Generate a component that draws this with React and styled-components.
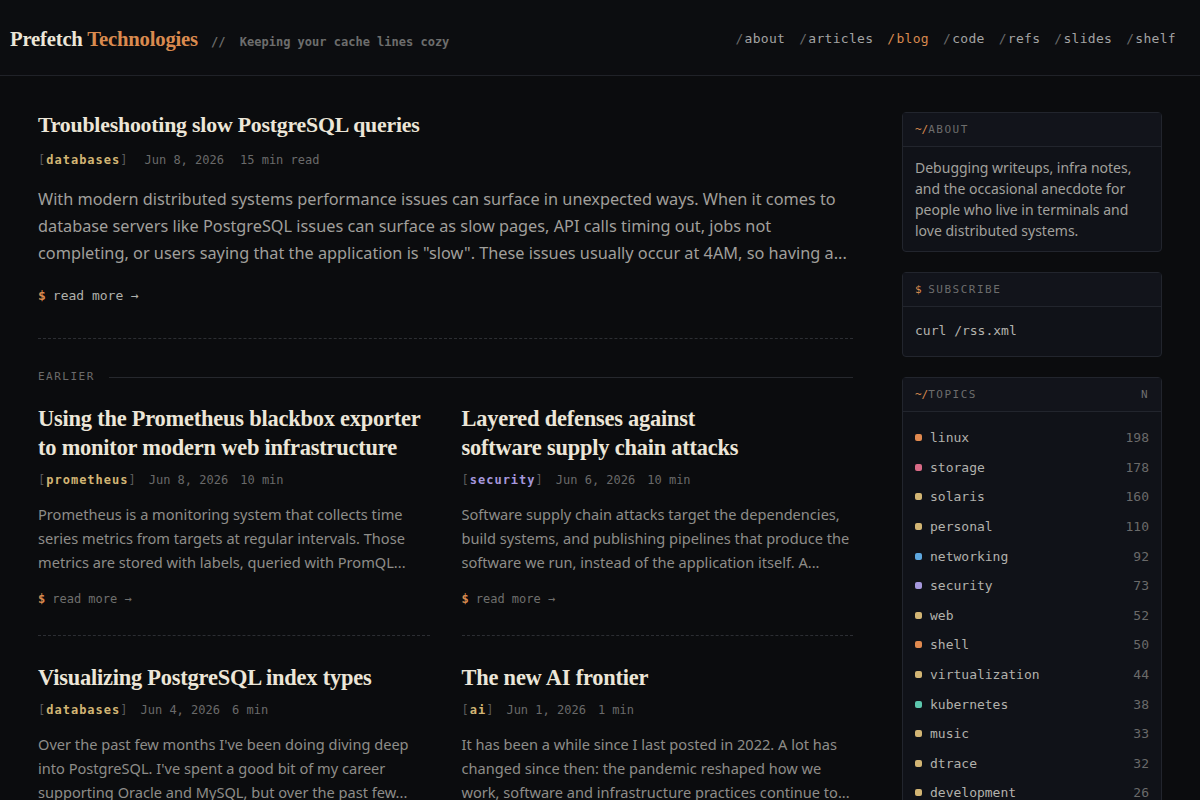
import React from "react";
import styled, { createGlobalStyle } from "styled-components";

const MONO = `"DejaVu Sans Mono", "Liberation Mono", monospace`;
const SANS = `"Noto Sans", "Open Sans", sans-serif`;
const SERIF = `"Liberation Serif", "Times New Roman", serif`;

const C = {
  bg: "#0b0c0e",
  line: "#202228",
  title: "#ece6d8",
  text: "#a09f9b",
  textDim: "#8e8d89",
  meta: "#6a6a6a",
  orange: "#d98a4f",
  yellow: "#d2b574",
  lavender: "#a597dc",
  box: "#101218",
  boxBorder: "#22252d",
};

const Global = createGlobalStyle`
  html, body { margin: 0; padding: 0; background: ${C.bg}; }
  body { font-family: ${SANS}; color: ${C.text}; }
  * { box-sizing: border-box; }
`;

const Header = styled.header`
  height: 76px;
  border-bottom: 1px solid ${C.line};
  display: flex;
  align-items: center;
  justify-content: space-between;
  padding: 2px 24px 0 10px;
  background: #0c0d10;
`;

const Brand = styled.div`
  display: flex;
  align-items: baseline;
  gap: 13px;
  padding-top: 1px;
`;

const Logo = styled.div`
  font-family: ${SERIF};
  font-weight: 700;
  font-size: 20.7px;
  color: ${C.title};
  letter-spacing: -0.2px;
  span { color: ${C.orange}; }
`;

const Tagline = styled.div`
  font-family: ${MONO};
  font-size: 12px;
  font-weight: 700;
  color: #6d6d6d;
  white-space: pre;
`;

const Nav = styled.nav`
  display: flex;
  gap: 14px;
  font-family: ${MONO};
  font-size: 13px;
  letter-spacing: 0.3px;
`;

const NavItem = styled.a`
  color: ${(p) => (p.$active ? C.orange : "#a3a3a3")};
  text-decoration: none;
  span { color: ${(p) => (p.$active ? C.orange : "#6a6a6a")}; margin-right: 1px; }
`;

const Page = styled.div`
  max-width: 1124px;
  margin: 0 auto;
  display: grid;
  grid-template-columns: 1fr 260px;
  gap: 49px;
  padding: 35px 0 40px;
`;

const Main = styled.main`
  min-width: 0;
`;

const Featured = styled.article`
  padding-bottom: 32px;
  border-bottom: 1px dashed #2c2e33;
`;

const Title = styled.h2`
  margin: 0;
  font-family: ${SERIF};
  font-weight: 700;
  color: ${C.title};
  font-size: ${(p) => (p.$big ? "21.8px" : "22.4px")};
  line-height: 29px;
  letter-spacing: -0.2px;
`;

const Meta = styled.div`
  display: flex;
  align-items: center;
  gap: ${(p) => (p.$wide ? "16px" : "12px")};
  margin-top: ${(p) => (p.$wide ? "11px" : "9px")};
  font-family: ${MONO};
  font-size: 12px;
  line-height: 18px;
  color: ${C.meta};
`;

const Tag = styled.span`
  color: #5a5a5a;
  letter-spacing: 1px;
  b { color: ${(p) => p.$color}; font-weight: 700; }
`;

const Excerpt = styled.p`
  margin: ${(p) => (p.$big ? "17px 0 0" : "13px 0 0")};
  font-family: ${SANS};
  font-size: ${(p) => (p.$big ? "16.3px" : "14.6px")};
  line-height: ${(p) => (p.$big ? "27px" : "24px")};
  color: ${(p) => (p.$big ? C.text : C.textDim)};
`;

const ReadMore = styled.a`
  display: block;
  margin-top: ${(p) => (p.$big ? "19px" : "16px")};
  font-family: ${MONO};
  font-size: ${(p) => (p.$big ? "13px" : "12px")};
  line-height: ${(p) => (p.$big ? "20px" : "18px")};
  color: ${(p) => (p.$big ? "#b0b0ab" : "#6f6f6d")};
  text-decoration: none;
  span { color: ${C.orange}; font-weight: 700; margin-right: 7px; }
`;

const SectionLabel = styled.div`
  display: flex;
  align-items: center;
  gap: 14px;
  margin-top: 30px;
  font-family: ${MONO};
  font-size: 11px;
  line-height: 16px;
  letter-spacing: 1.5px;
  color: #6b6b6b;
  &::after {
    content: "";
    flex: 1;
    height: 1px;
    background: #26282d;
  }
`;

const Grid = styled.div`
  display: grid;
  grid-template-columns: 1fr 1fr;
  column-gap: 32px;
  row-gap: 27px;
  margin-top: 19px;
`;

const Card = styled.article`
  padding-bottom: 27px;
  border-bottom: 1px dashed #2c2e33;
`;

const Side = styled.aside`
  display: flex;
  flex-direction: column;
  gap: 20px;
  padding-top: 1px;
`;

const Box = styled.section`
  background: ${C.box};
  border: 1px solid ${C.boxBorder};
  border-radius: 4px;
`;

const BoxHead = styled.div`
  height: 34px;
  display: flex;
  align-items: center;
  justify-content: space-between;
  padding: 0 12px;
  border-bottom: 1px solid ${C.boxBorder};
  background: #12141b;
  font-family: ${MONO};
  font-size: 11px;
  letter-spacing: 1.5px;
  color: #6d6d6d;
  span { color: ${C.orange}; letter-spacing: 0; }
`;

const BoxText = styled.p`
  margin: 0;
  padding: 10px 12px 10px;
  font-family: ${SANS};
  font-size: 14px;
  line-height: 21px;
  color: #a2a19d;
`;

const BoxCode = styled.div`
  padding: 14px 12px 15px;
  font-family: ${MONO};
  font-size: 13px;
  line-height: 20px;
  color: #b4b3ae;
`;

const TopicList = styled.ul`
  list-style: none;
  margin: 0;
  padding: 11px 12px 0;
`;

const TopicRow = styled.li`
  display: flex;
  align-items: center;
  height: 29.6px;
  font-family: ${MONO};
  font-size: 13px;
  color: #b2b1ac;
`;

const Dot = styled.i`
  width: 7px;
  height: 7px;
  border-radius: 2px;
  background: ${(p) => p.$color};
  margin-right: 8px;
  flex: none;
`;

const Count = styled.span`
  margin-left: auto;
  color: #6a6a6a;
`;

const Pre = styled.span`
  white-space: pre-line;
`;

const navItems = ["about", "articles", "blog", "code", "refs", "slides", "shelf"];

const posts = [
  {
    title: "Using the Prometheus blackbox exporter to monitor modern web infrastructure",
    tag: "prometheus",
    color: C.yellow,
    date: "Jun 8, 2026",
    time: "10 min",
    excerpt:
      "Prometheus is a monitoring system that collects time series metrics from targets at regular intervals. Those metrics are stored with labels, queried with PromQL...",
  },
  {
    title: "Layered defenses against\nsoftware supply chain attacks",
    tag: "security",
    color: C.lavender,
    date: "Jun 6, 2026",
    time: "10 min",
    excerpt:
      "Software supply chain attacks target the dependencies, build systems, and publishing pipelines that produce the software we run, instead of the application itself. A...",
  },
  {
    title: "Visualizing PostgreSQL index types",
    tag: "databases",
    color: C.yellow,
    date: "Jun 4, 2026",
    time: "6 min",
    excerpt:
      "Over the past few months I've been doing diving deep into PostgreSQL. I've spent a good bit of my career supporting Oracle and MySQL, but over the past few...",
  },
  {
    title: "The new AI frontier",
    tag: "ai",
    color: C.yellow,
    date: "Jun 1, 2026",
    time: "1 min",
    excerpt:
      "It has been a while since I last posted in 2022. A lot has changed since then: the pandemic reshaped how we work, software and infrastructure practices continue to...",
  },
];

const topics = [
  ["linux", 198, "#e0894f"],
  ["storage", 178, "#d86a86"],
  ["solaris", 160, "#d2b574"],
  ["personal", 110, "#d2b574"],
  ["networking", 92, "#5ea7df"],
  ["security", 73, "#a597dc"],
  ["web", 52, "#d2b574"],
  ["shell", 50, "#e0894f"],
  ["virtualization", 44, "#d2b574"],
  ["kubernetes", 38, "#5cc6ad"],
  ["music", 33, "#d2b574"],
  ["dtrace", 32, "#d2b574"],
  ["development", 26, "#d2b574"],
];

export default function App() {
  return (
    <>
      <Global />
      <Header>
        <Brand>
          <Logo>
            Prefetch <span>Technologies</span>
          </Logo>
          <Tagline>{"//  Keeping your cache lines cozy"}</Tagline>
        </Brand>
        <Nav>
          {navItems.map((n) => (
            <NavItem key={n} href="#" $active={n === "blog"}>
              <span>/</span>
              {n}
            </NavItem>
          ))}
        </Nav>
      </Header>
      <Page>
        <Main>
          <Featured>
            <Title $big>Troubleshooting slow PostgreSQL queries</Title>
            <Meta $wide>
              <Tag $color={C.yellow}>
                [<b>databases</b>]
              </Tag>
              <span>Jun 8, 2026</span>
              <span>15 min read</span>
            </Meta>
            <Excerpt $big>
              With modern distributed systems performance issues can surface in unexpected ways. When it comes to
              database servers like PostgreSQL issues can surface as slow pages, API calls timing out, jobs not
              completing, or users saying that the application is "slow". These issues usually occur at 4AM, so having a...
            </Excerpt>
            <ReadMore $big href="#">
              <span>$</span>read more →
            </ReadMore>
          </Featured>
          <SectionLabel>EARLIER</SectionLabel>
          <Grid>
            {posts.map((p) => (
              <Card key={p.title}>
                <Title>
                  <Pre>{p.title}</Pre>
                </Title>
                <Meta>
                  <Tag $color={p.color}>
                    [<b>{p.tag}</b>]
                  </Tag>
                  <span>{p.date}</span>
                  <span>{p.time}</span>
                </Meta>
                <Excerpt>{p.excerpt}</Excerpt>
                <ReadMore href="#">
                  <span>$</span>read more →
                </ReadMore>
              </Card>
            ))}
          </Grid>
        </Main>
        <Side>
          <Box>
            <BoxHead>
              <div>
                <span>~/</span>ABOUT
              </div>
            </BoxHead>
            <BoxText>
              Debugging writeups, infra notes, and the occasional anecdote for people who live in terminals and love
              distributed systems.
            </BoxText>
          </Box>
          <Box>
            <BoxHead>
              <div>
                <span>$ </span>SUBSCRIBE
              </div>
            </BoxHead>
            <BoxCode>curl /rss.xml</BoxCode>
          </Box>
          <Box>
            <BoxHead>
              <div>
                <span>~/</span>TOPICS
              </div>
              <div>N</div>
            </BoxHead>
            <TopicList>
              {topics.map(([name, n, color]) => (
                <TopicRow key={name}>
                  <Dot $color={color} />
                  {name}
                  <Count>{n}</Count>
                </TopicRow>
              ))}
            </TopicList>
          </Box>
        </Side>
      </Page>
    </>
  );
}
